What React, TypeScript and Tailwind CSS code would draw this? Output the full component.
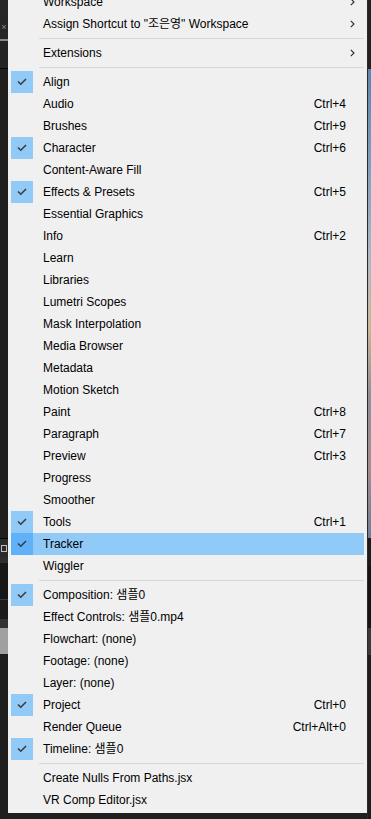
import React from "react";

type Item =
  | { sep: true }
  | { label: string; checked?: boolean; shortcut?: string; sub?: boolean; hover?: boolean };

const items: Item[] = [
  { label: "Workspace", sub: true },
  { label: "Assign Shortcut to \"조은영\" Workspace", sub: true },
  { sep: true },
  { label: "Extensions", sub: true },
  { sep: true },
  { label: "Align", checked: true },
  { label: "Audio", shortcut: "Ctrl+4" },
  { label: "Brushes", shortcut: "Ctrl+9" },
  { label: "Character", checked: true, shortcut: "Ctrl+6" },
  { label: "Content-Aware Fill" },
  { label: "Effects & Presets", checked: true, shortcut: "Ctrl+5" },
  { label: "Essential Graphics" },
  { label: "Info", shortcut: "Ctrl+2" },
  { label: "Learn" },
  { label: "Libraries" },
  { label: "Lumetri Scopes" },
  { label: "Mask Interpolation" },
  { label: "Media Browser" },
  { label: "Metadata" },
  { label: "Motion Sketch" },
  { label: "Paint", shortcut: "Ctrl+8" },
  { label: "Paragraph", shortcut: "Ctrl+7" },
  { label: "Preview", shortcut: "Ctrl+3" },
  { label: "Progress" },
  { label: "Smoother" },
  { label: "Tools", checked: true, shortcut: "Ctrl+1" },
  { label: "Tracker", checked: true, hover: true },
  { label: "Wiggler" },
  { sep: true },
  { label: "Composition: 샘플0", checked: true },
  { label: "Effect Controls: 샘플0.mp4" },
  { label: "Flowchart: (none)" },
  { label: "Footage: (none)" },
  { label: "Layer: (none)" },
  { label: "Project", checked: true, shortcut: "Ctrl+0" },
  { label: "Render Queue", shortcut: "Ctrl+Alt+0" },
  { label: "Timeline: 샘플0", checked: true },
  { sep: true },
  { label: "Create Nulls From Paths.jsx" },
  { label: "VR Comp Editor.jsx" },
];

function Check() {
  return (
    <svg width="10" height="8" viewBox="0 0 10 8">
      <polyline points="1,3.5 3.8,6.3 9,1" fill="none" stroke="#3a3a3a" strokeWidth="1.5" />
    </svg>
  );
}

function Chevron() {
  return (
    <svg width="5" height="8" viewBox="0 0 5 8">
      <polyline points="0.8,0.8 4,4 0.8,7.2" fill="none" stroke="#2a2a2a" strokeWidth="1.1" />
    </svg>
  );
}

export default function App() {
  return (
    <div
      className="w-[371px] h-[819px] bg-[#1f1f1f] flex overflow-hidden text-[12px] text-black"
      style={{ fontFamily: '"Liberation Sans", "Noto Sans CJK KR", sans-serif' }}
    >
      {/* left background strip */}
      <div className="w-[8px] shrink-0 flex flex-col">
        <div className="h-[15px] bg-[#262626]" />
        <div className="h-[24px] bg-[#252525] flex items-center justify-center text-[9px] text-[#8a8a8a] leading-none">×</div>
        <div className="h-[2px] bg-[#8a8a8a]" />
        <div className="h-[27px] bg-[#232323]" />
        <div className="h-[1px] bg-[#050505]" />
        <div className="h-[469px] bg-[#1f1f1f]" />
        <div className="h-[1px] bg-[#050505]" />
        <div className="h-[18px] bg-[#2a2a2a] flex items-center pl-[1px]">
          <div className="w-[6px] h-[7px] border border-[#bdbdbd]" />
        </div>
        <div className="h-[6px] bg-[#2e2e2e]" />
        <div className="h-[36px] bg-[#171717]" />
        <div className="h-[1px] bg-[#3a3a3a]" />
        <div className="h-[19px] bg-[#1b1b1b]" />
        <div className="h-[9px] bg-[#333333]" />
        <div className="h-[26px] bg-[#a0a0a0]" />
        <div className="flex-1 bg-[#1e1e1e]" />
      </div>

      {/* menu */}
      <div className="w-[359px] shrink-0 -mt-[12px] h-[825px] bg-[#f0f0f0] pt-[3px] pb-[2px] flex flex-col">
        {items.map((it, i) =>
          "sep" in it ? (
            <div key={i} className="h-[7px] pl-[31px] pr-[3px] flex items-center">
              <div className="h-[1px] w-full bg-[#d7d7d7]" />
            </div>
          ) : (
            <div
              key={i}
              className={`h-[22px] mx-[3px] flex items-center shrink-0 ${it.hover ? "bg-[#91c9f7]" : ""}`}
            >
              <div
                className={`w-[22px] h-[22px] shrink-0 flex items-center justify-center ${
                  it.checked ? (it.hover ? "bg-[#5fb2f9]" : "bg-[#91c9f7]") : ""
                }`}
              >
                {it.checked && <Check />}
              </div>
              <div className="ml-[10px] flex-1 whitespace-nowrap leading-none">{it.label}</div>
              {it.shortcut && <div className="mr-[18px] whitespace-nowrap leading-none">{it.shortcut}</div>}
              {it.sub && (
                <div className="mr-[9px] flex items-center">
                  <Chevron />
                </div>
              )}
            </div>
          )
        )}
      </div>

      {/* right background strip */}
      <div className="w-[4px] shrink-0 flex">
        <div className="w-[1px] bg-[#2a2a2a]" />
        <div className="flex-1 flex flex-col">
          <div className="h-[69px] bg-[#222222]" />
          <div className="h-[469px] bg-[linear-gradient(to_bottom,#5b86b0,#86a6c0_25%,#a9bac4_40%,#c7b999_55%,#8e9096_70%,#a18f90_85%,#6f7f95)]" />
          <div className="h-[28px] bg-[#1b1b1b]" />
          <div className="h-[62px] bg-[#151515]" />
          <div className="h-[27px] bg-[#3a3a3a]" />
          <div className="flex-1 bg-[#1e1e1e]" />
        </div>
      </div>
    </div>
  );
}
